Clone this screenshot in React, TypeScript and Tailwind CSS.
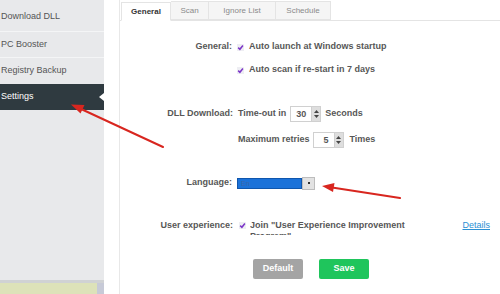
import React from "react";

const Check = () => (
  <svg width="7" height="7" viewBox="0 0 7 7" className="shrink-0">
    <rect x="0" y="0" width="7" height="7" fill="#eeeef3" />
    <path d="M1.2 3.6 L2.9 5.3 L5.9 1.5" stroke="#7b35c8" strokeWidth="1.5" fill="none" />
  </svg>
);

const Spin = ({ value }: { value: string }) => (
  <div className="flex h-[16px] w-[31px] border border-[#d0d0d0] bg-white">
    <div className="flex-1 text-right pr-[5px] leading-[14px]">{value}</div>
    <div className="w-[9px] bg-[#dedede] flex flex-col items-center justify-center gap-[2px] border-l border-[#cfcfcf]">
      <svg width="5" height="3" viewBox="0 0 5 3"><path d="M0 3 L2.5 0 L5 3 Z" fill="#444" /></svg>
      <svg width="5" height="3" viewBox="0 0 5 3"><path d="M0 0 L2.5 3 L5 0 Z" fill="#444" /></svg>
    </div>
  </div>
);

export default function App() {
  return (
    <div
      className="relative flex w-[500px] h-[294px] overflow-hidden bg-white text-[9px]"
      style={{ fontFamily: '"Liberation Sans", Arial, sans-serif' }}
    >
      {/* Sidebar */}
      <div className="w-[104px] h-full bg-[#e8e9eb] flex flex-col text-[#555] shrink-0">
        <div className="h-[32px] pt-[3px] flex items-center pl-[1px] border-b border-[#f4f5f6]">Download DLL</div>
        <div className="h-[26px] flex items-center pl-[1px] border-b border-[#f4f5f6]">PC Booster</div>
        <div className="h-[26px] flex items-center pl-[1px]">Registry Backup</div>
        <div className="relative h-[26px] flex items-center pl-[1px] bg-[#2f3a40] text-white">
          Settings
          <div className="absolute right-0 top-[9px] w-0 h-0 border-y-[4px] border-y-transparent border-r-[5px] border-r-white" />
        </div>
        <div className="flex-1" />
        <div className="h-[3px] bg-[#d0d2d4]" />
        <div className="h-[11px] flex">
          <div className="flex-1 bg-[#dde2b9]" />
          <div className="w-[7px] bg-[#c7cad7]" />
        </div>
      </div>

      <div className="w-[16px] shrink-0 border-r border-[#e8e8e8]" />

      {/* Content */}
      <div className="flex-1 flex flex-col text-[#575757] font-bold">
        {/* Tabs */}
        <div className="h-[21px] flex items-end border-b border-[#e4e4e4] pl-[1px] text-[8px]">
          <div className="w-[50px] h-[19px] -mb-px flex items-center justify-center bg-white border border-[#e4e4e4] border-b-white text-[#333] font-bold">General</div>
          <div className="w-[38px] h-[19px] flex items-center justify-center bg-[#f5f5f5] border border-l-0 border-[#e4e4e4] text-[#8a8a8a] font-normal">Scan</div>
          <div className="w-[67px] h-[19px] flex items-center justify-center bg-[#f5f5f5] border border-l-0 border-[#e4e4e4] text-[#8a8a8a] font-normal">Ignore List</div>
          <div className="w-[55px] h-[19px] flex items-center justify-center bg-[#f5f5f5] border border-l-0 border-[#e4e4e4] text-[#8a8a8a] font-normal">Schedule</div>
        </div>

        {/* Row 1 */}
        <div className="mt-[16px] h-[20px] flex items-center">
          <div className="w-[112px] text-right shrink-0">General:</div>
          <div className="ml-[5px]"><Check /></div>
          <div className="ml-[5px]">Auto launch at Windows startup</div>
        </div>
        {/* Row 2 */}
        <div className="mt-[3px] h-[20px] flex items-center">
          <div className="w-[112px] shrink-0" />
          <div className="ml-[5px]"><Check /></div>
          <div className="ml-[5px]">Auto scan if re-start in 7 days</div>
        </div>
        {/* Row 3 */}
        <div className="mt-[24px] h-[20px] flex items-center">
          <div className="w-[113px] text-right shrink-0">DLL Download:</div>
          <div className="ml-[5px]">Time-out in</div>
          <div className="ml-[4px]"><Spin value="30" /></div>
          <div className="ml-[4px]">Seconds</div>
        </div>
        {/* Row 4 */}
        <div className="mt-[6px] h-[20px] flex items-center">
          <div className="w-[113px] shrink-0" />
          <div className="ml-[5px]">Maximum retries</div>
          <div className="ml-[3px]"><Spin value="5" /></div>
          <div className="ml-[6px]">Times</div>
        </div>
        {/* Row 5 */}
        <div className="mt-[23px] h-[20px] flex items-center">
          <div className="w-[112px] text-right shrink-0">Language:</div>
          <div className="ml-[5px] flex items-center">
            <div className="w-[65px] h-[11px] bg-[#1b72d9] border border-[#0f56ad] text-[#3d66a6] font-normal text-[7px] leading-[9px] pl-[3px]">En</div>
            <div className="w-[13px] h-[13px] bg-[#e2e2e2] border border-[#bdbdbd] flex items-center justify-center">
              <div className="w-[2px] h-[2px] bg-[#333]" />
            </div>
          </div>
        </div>
        {/* Row 6 */}
        <div className="mt-[27px] h-[15px] flex items-start leading-[11px]">
          <div className="w-[113px] text-right shrink-0">User experience:</div>
          <div className="ml-[6px] mt-[2px]"><Check /></div>
          <div className="ml-[4px] w-[172px] h-[15px] overflow-hidden">Join "User Experience Improvement Program"</div>
          <div className="ml-auto mr-[10px] text-[#2b8fd3] underline font-normal">Details</div>
        </div>
        {/* Buttons */}
        <div className="mt-[24px] flex justify-center gap-[16px] pl-[2px]">
          <div className="w-[50px] h-[20px] rounded-[2px] bg-[#a4a4a4] text-white flex items-center justify-center">Default</div>
          <div className="w-[50px] h-[20px] rounded-[2px] bg-[#1fc55c] text-white flex items-center justify-center">Save</div>
        </div>
      </div>

      {/* Red annotation arrows */}
      <svg className="absolute inset-0 pointer-events-none" width="500" height="294" viewBox="0 0 500 294">
        <line x1="163" y1="147" x2="80" y2="108.5" stroke="#d8261f" strokeWidth="2" strokeLinecap="round" />
        <polygon points="71,104.5 80.5,113.5 84.5,105" fill="#d8261f" />
        <line x1="400" y1="198" x2="332" y2="187.5" stroke="#d8261f" strokeWidth="2" strokeLinecap="round" />
        <polygon points="322,186 333,192 334.5,183" fill="#d8261f" />
      </svg>
    </div>
  );
}
